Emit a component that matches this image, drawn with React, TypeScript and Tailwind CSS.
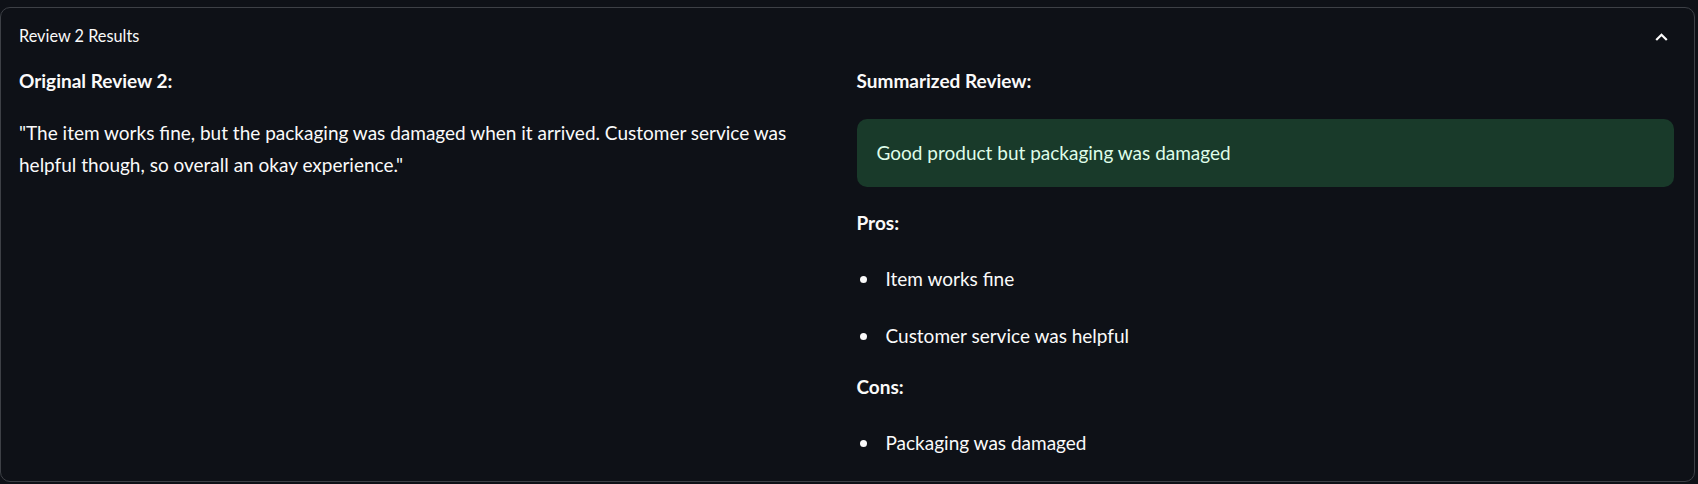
export default function App() {
  return (
    <div className="w-[1698px] h-[484px] bg-[#0e1117] pt-[7px] text-[#fafafa] font-['Lato','Liberation_Sans',sans-serif]">
      <div className="w-[1695px] h-[475px] border border-[#3d4046] rounded-[10px] overflow-hidden">
        <div className="h-[57px] flex items-center justify-between pl-[18px] pr-[26px]">
          <span className="text-[16.3px]">Review 2 Results</span>
          <svg width="13" height="8" viewBox="0 0 13 8" fill="none">
            <path d="M1.2 7 L6.5 1.7 L11.8 7" stroke="#fafafa" strokeWidth="2.2" />
          </svg>
        </div>
        <div className="grid grid-cols-2 gap-[20px] pl-[18px] pr-[20px] text-[19px] leading-[32px]">
          <div>
            <p className="font-bold">Original Review 2:</p>
            <p className="mt-[20px]">
              "The item works fine, but the packaging was damaged when it arrived. Customer service was
              helpful though, so overall an okay experience."
            </p>
          </div>
          <div>
            <p className="font-bold">Summarized Review:</p>
            <div className="mt-[22px] h-[68px] flex items-center px-[20px] rounded-[10px] bg-[#193a2a] text-[#dffde9]">
              Good product but packaging was damaged
            </div>
            <p className="mt-[20px] font-bold">Pros:</p>
            <ul>
              <li className="mt-[24px] flex items-center">
                <span className="w-[7px] h-[7px] rounded-full bg-[#fafafa] ml-[3px] mr-[19px]"></span>
                Item works fine
              </li>
              <li className="mt-[25px] flex items-center">
                <span className="w-[7px] h-[7px] rounded-full bg-[#fafafa] ml-[3px] mr-[19px]"></span>
                Customer service was helpful
              </li>
            </ul>
            <p className="mt-[19px] font-bold">Cons:</p>
            <ul>
              <li className="mt-[24px] flex items-center">
                <span className="w-[7px] h-[7px] rounded-full bg-[#fafafa] ml-[3px] mr-[19px]"></span>
                Packaging was damaged
              </li>
            </ul>
          </div>
        </div>
      </div>
    </div>
  );
}
